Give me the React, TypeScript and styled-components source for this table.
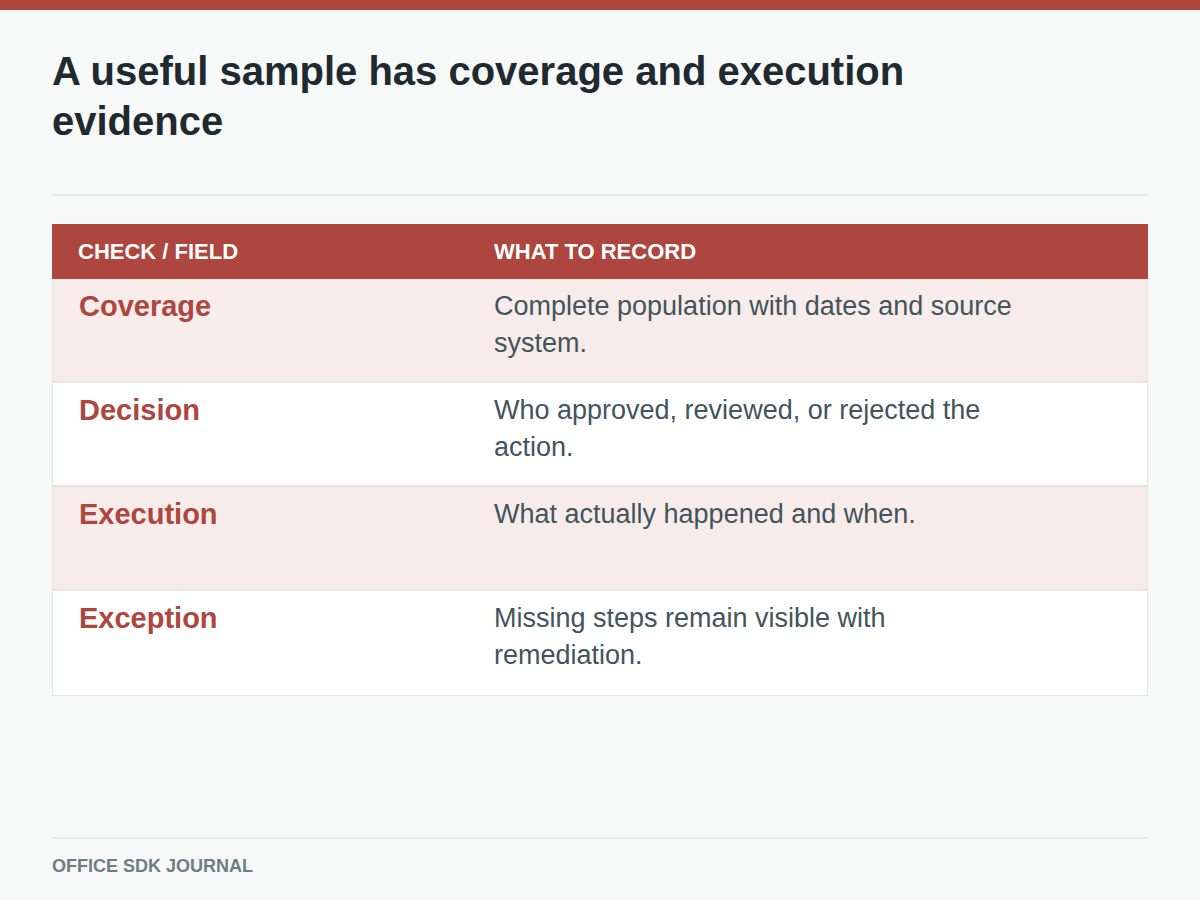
import React from 'react';
import styled, { createGlobalStyle } from 'styled-components';

const GlobalStyle = createGlobalStyle`
  body {
    margin: 0;
    background: #f7f9f9;
    font-family: "Liberation Sans", Arial, sans-serif;
  }
`;

const Page = styled.div`
  display: flex;
  flex-direction: column;
  height: 900px;
  box-sizing: border-box;
  border-top: 10px solid #ad463f;
  padding: 36px 52px 0;
  background: #f7f9f9;
`;

const Title = styled.h1`
  margin: 0;
  max-width: 920px;
  font-size: 40px;
  line-height: 50px;
  font-weight: 700;
  color: #1f2a30;
`;

const Divider = styled.hr`
  margin: 48px 0 28px;
  border: 0;
  border-top: 2px solid #e6ebea;
`;

const Table = styled.div`
  display: grid;
  grid-template-columns: 415px 1fr;
  border: 1px solid #e3e6e5;
  border-top: 0;
`;

const HeadCell = styled.div`
  display: flex;
  align-items: center;
  height: 55px;
  padding: 0 26px;
  background: #ad463f;
  color: #ffffff;
  font-size: 22px;
  font-weight: 700;
  text-transform: uppercase;
  &:first-child { margin-left: -1px; }
  &:nth-child(2) { margin-right: -1px; }
`;

const Cell = styled.div<{ $striped: boolean; $last: boolean }>`
  box-sizing: border-box;
  min-height: 104px;
  padding: 9px 26px 0;
  background: ${({ $striped }) => ($striped ? '#f7ecea' : '#ffffff')};
  border-bottom: ${({ $last }) => ($last ? '0' : '2px solid #e3e6e5')};
`;

const Label = styled.div`
  margin-top: 1px;
  font-size: 29px;
  line-height: 35px;
  font-weight: 700;
  color: #ad463f;
`;

const Description = styled.div`
  max-width: 530px;
  font-size: 27px;
  line-height: 36.5px;
  color: #43555b;
`;

const Footer = styled.footer`
  margin-top: auto;
  margin-bottom: 23px;
  padding-top: 16px;
  border-top: 2px solid #e6ebea;
  font-size: 18px;
  line-height: 22px;
  font-weight: 700;
  color: #6c7d83;
  text-transform: uppercase;
`;

const rows = [
  { label: 'Coverage', text: 'Complete population with dates and source system.' },
  { label: 'Decision', text: 'Who approved, reviewed, or rejected the action.' },
  { label: 'Execution', text: 'What actually happened and when.' },
  { label: 'Exception', text: 'Missing steps remain visible with remediation.' },
];

const App: React.FC = () => (
  <>
    <GlobalStyle />
    <Page>
      <Title>A useful sample has coverage and execution evidence</Title>
      <Divider />
      <Table>
        <HeadCell>Check / Field</HeadCell>
        <HeadCell>What to record</HeadCell>
        {rows.map((row, i) => (
          <React.Fragment key={row.label}>
            <Cell $striped={i % 2 === 0} $last={i === rows.length - 1}>
              <Label>{row.label}</Label>
            </Cell>
            <Cell $striped={i % 2 === 0} $last={i === rows.length - 1}>
              <Description>{row.text}</Description>
            </Cell>
          </React.Fragment>
        ))}
      </Table>
      <Footer>Office SDK Journal</Footer>
    </Page>
  </>
);

export default App;
